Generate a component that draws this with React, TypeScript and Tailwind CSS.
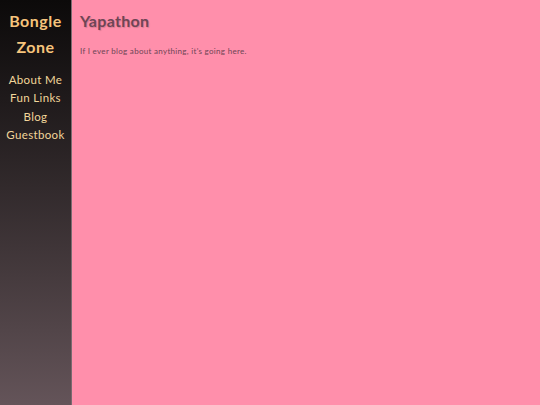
export default function App() {
  const links = ["About Me", "Fun Links", "Blog", "Guestbook"];

  return (
    <div className="flex h-[405px] w-full bg-[#ff8fab] font-['Lato',sans-serif]">
      {/* Sidebar */}
      <aside className="flex w-[72px] shrink-0 flex-col items-center border-r border-[#7a6a70] bg-gradient-to-b from-[#0c0a0a] to-[#645459] pt-[8px]">
        <h1 className="text-center text-[16px] font-bold leading-[26px] tracking-[0.5px] text-[#f6c47c]">
          Bongle
          <br />
          Zone
        </h1>
        <nav className="mt-[10.5px] flex flex-col items-center text-[11.5px] leading-[18.5px] tracking-[0.35px] text-[#f2d69a]">
          {links.map((link) => (
            <a key={link} href="#" className="whitespace-nowrap">
              {link}
            </a>
          ))}
        </nav>
      </aside>

      {/* Main */}
      <main className="flex-1 px-[8px] pt-[10px]">
        <h2 className="text-[16px] font-bold leading-[22px] tracking-[0.3px] text-[#6e4555] [text-shadow:1px_1px_1px_rgba(0,0,0,0.15)]">
          Yapathon
        </h2>
        <p className="mt-[13px] text-[8px] tracking-[0.3px] text-[#6e4555]">
          If I ever blog about anything, it's going here.
        </p>
      </main>
    </div>
  );
}
